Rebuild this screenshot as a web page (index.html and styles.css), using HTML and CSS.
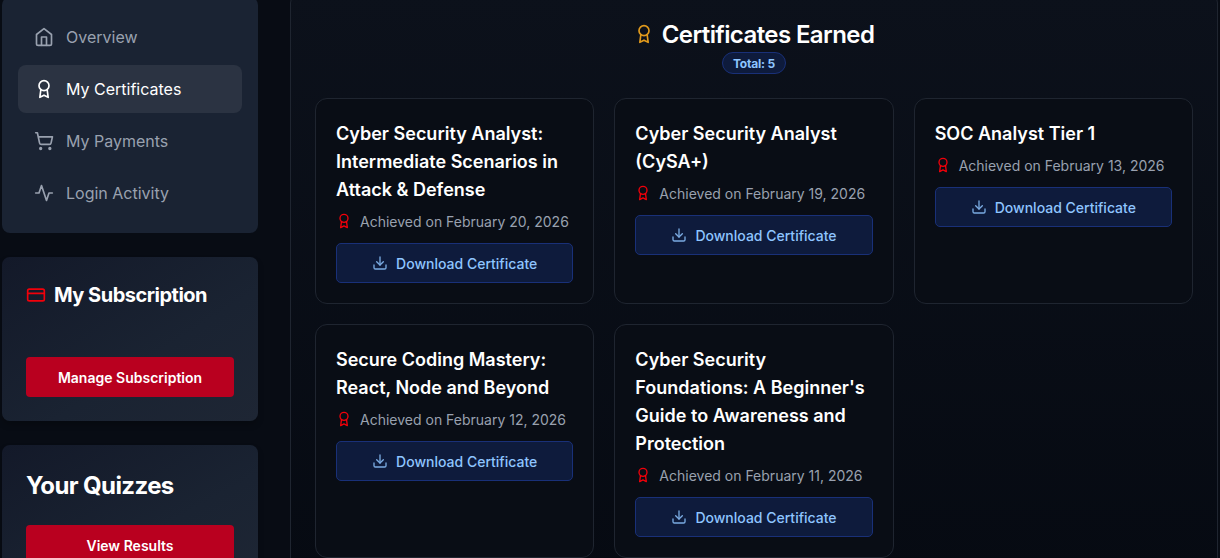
FILE: index.html
```html
<!DOCTYPE html>
<html lang="en">
<head>
    <meta charset="UTF-8">
    <meta name="viewport" content="width=device-width, initial-scale=1.0">
    <title>My Certificates</title>
    <link rel="stylesheet" href="styles.css">
</head>
<body>
    <svg class="sprite" width="0" height="0">
        <symbol id="award" viewBox="0 0 24 24">
            <circle cx="12" cy="8" r="6"/>
            <path d="M15.8 12.89 17 22l-5-2.6L7 22l1.2-9.11"/>
        </symbol>
        <symbol id="home" viewBox="0 0 24 24">
            <path d="m3 9 9-7 9 7v11a2 2 0 0 1-2 2H5a2 2 0 0 1-2-2z"/>
            <path d="M9 22V12h6v10"/>
        </symbol>
        <symbol id="cart" viewBox="0 0 24 24">
            <circle cx="8" cy="21" r="1"/>
            <circle cx="19" cy="21" r="1"/>
            <path d="M2.05 2.05h2l2.66 12.42a2 2 0 0 0 2 1.58h9.78a2 2 0 0 0 1.95-1.57l1.65-7.43H5.12"/>
        </symbol>
        <symbol id="activity" viewBox="0 0 24 24">
            <path d="M22 12h-4l-3 9L9 3l-3 9H2"/>
        </symbol>
        <symbol id="card" viewBox="0 0 24 24">
            <rect x="2" y="5" width="20" height="14" rx="2"/>
            <path d="M2 10h20"/>
        </symbol>
        <symbol id="download" viewBox="0 0 24 24">
            <path d="M21 15v4a2 2 0 0 1-2 2H5a2 2 0 0 1-2-2v-4"/>
            <path d="m7 10 5 5 5-5"/>
            <path d="M12 15V3"/>
        </symbol>
    </svg>

    <div class="dashboard">
        <aside class="sidebar">
            <nav class="menu">
                <a class="menu-item"><svg class="icon"><use href="#home"/></svg>Overview</a>
                <a class="menu-item active"><svg class="icon"><use href="#award"/></svg>My Certificates</a>
                <a class="menu-item"><svg class="icon"><use href="#cart"/></svg>My Payments</a>
                <a class="menu-item"><svg class="icon"><use href="#activity"/></svg>Login Activity</a>
            </nav>
            <section class="box subscription">
                <h3><svg class="icon red"><use href="#card"/></svg>My Subscription</h3>
                <button class="primary">Manage Subscription</button>
            </section>
            <section class="box quizzes">
                <h2>Your Quizzes</h2>
                <button class="primary">View Results</button>
            </section>
        </aside>

        <main class="panel">
            <header class="panel-header">
                <h1><svg class="icon gold"><use href="#award"/></svg><span>Certificates Earned</span></h1>
                <span class="total">Total: 5</span>
            </header>
            <div class="certificates">
                <article class="certificate">
                    <h4>Cyber Security Analyst: Intermediate Scenarios in Attack &amp; Defense</h4>
                    <p><svg class="icon small red"><use href="#award"/></svg><span>Achieved on February 20, 2026</span></p>
                    <button class="download"><svg class="icon small"><use href="#download"/></svg>Download Certificate</button>
                </article>
                <article class="certificate">
                    <h4>Cyber Security Analyst (CySA+)</h4>
                    <p><svg class="icon small red"><use href="#award"/></svg><span>Achieved on February 19, 2026</span></p>
                    <button class="download"><svg class="icon small"><use href="#download"/></svg>Download Certificate</button>
                </article>
                <article class="certificate">
                    <h4>SOC Analyst Tier 1</h4>
                    <p><svg class="icon small red"><use href="#award"/></svg><span>Achieved on February 13, 2026</span></p>
                    <button class="download"><svg class="icon small"><use href="#download"/></svg>Download Certificate</button>
                </article>
                <article class="certificate">
                    <h4>Secure Coding Mastery: React, Node and Beyond</h4>
                    <p><svg class="icon small red"><use href="#award"/></svg><span>Achieved on February 12, 2026</span></p>
                    <button class="download"><svg class="icon small"><use href="#download"/></svg>Download Certificate</button>
                </article>
                <article class="certificate">
                    <h4>Cyber Security Foundations: A Beginner's Guide to Awareness and Protection</h4>
                    <p><svg class="icon small red"><use href="#award"/></svg><span>Achieved on February 11, 2026</span></p>
                    <button class="download"><svg class="icon small"><use href="#download"/></svg>Download Certificate</button>
                </article>
            </div>
        </main>
    </div>
</body>
</html>
```
FILE: styles.css
```css
* {
    box-sizing: border-box;
}
body {
    margin: 0;
    height: 100vh;
    overflow: hidden;
    background-color: #080c14;
    color: #fff;
    font-family: Inter, sans-serif;
}
h1, h2, h3, h4, p {
    margin: 0;
}
button {
    font-family: inherit;
    cursor: pointer;
}
.sprite {
    display: none;
}
.icon {
    width: 20px;
    height: 20px;
    flex: none;
    fill: none;
    stroke: currentColor;
    stroke-width: 2;
    stroke-linecap: round;
    stroke-linejoin: round;
}
.icon.small {
    width: 16px;
    height: 16px;
}
.icon.red {
    color: #f2000a;
}
.icon.gold {
    color: #e19a1c;
}
.dashboard {
    display: flex;
    align-items: flex-start;
    gap: 32px;
    width: 1216px;
    margin: -9px 0 0 2px;
}

/* sidebar */
.sidebar {
    width: 256px;
    flex: none;
    display: flex;
    flex-direction: column;
    gap: 24px;
    padding-top: 6px;
}
.menu {
    display: flex;
    flex-direction: column;
    gap: 4px;
    padding: 16px;
    border-radius: 8px;
    background-color: #1a2333;
}
.menu-item {
    display: flex;
    align-items: center;
    gap: 12px;
    height: 48px;
    padding: 0 16px;
    border-radius: 8px;
    color: #99a1af;
    font-size: 16px;
}
.menu-item.active {
    background-color: #2b3342;
    color: #fff;
}
.box {
    display: flex;
    flex-direction: column;
    padding: 24px;
    border-radius: 8px;
    background: linear-gradient(to bottom right, #131929, #1a2332 60%, #1e2634);
    box-shadow: 0 4px 6px rgba(0, 0, 0, 0.2);
}
.subscription {
    gap: 48px;
}
.quizzes {
    gap: 23px;
}
.box h3 {
    display: flex;
    align-items: center;
    gap: 8px;
    font-size: 20px;
    line-height: 28px;
    font-weight: 700;
    letter-spacing: -0.5px;
}
.box h2 {
    padding-top: 1px;
    font-size: 24px;
    line-height: 32px;
    font-weight: 700;
    letter-spacing: -0.6px;
}
.primary {
    height: 40px;
    border: none;
    border-radius: 4px;
    background-color: #b9001f;
    color: #fff;
    font-size: 14px;
    font-weight: 600;
}

/* certificates */
.panel {
    flex: 1;
    padding: 24px;
    border: 1px solid #1f2530;
    border-radius: 12px;
    background: linear-gradient(#0c111b, #060a12);
}
.panel-header {
    display: flex;
    flex-direction: column;
    align-items: center;
    margin-bottom: 24px;
}
.panel-header h1 {
    display: flex;
    align-items: center;
    gap: 8px;
    height: 36px;
    font-size: 24px;
    line-height: 36px;
    font-weight: 600;
    letter-spacing: -0.6px;
}
.panel-header h1 span {
    padding-top: 2px;
}
.total {
    width: 64px;
    height: 22px;
    padding-top: 1px;
    border: 1px solid #193078;
    border-radius: 11px;
    background-color: #0e1b3c;
    color: #8ec5ff;
    font-size: 12px;
    line-height: 20px;
    font-weight: 700;
    letter-spacing: -0.2px;
    text-align: center;
}
.certificates {
    display: grid;
    grid-template-columns: repeat(3, 1fr);
    gap: 20px;
}
.certificate {
    padding: 21px 20px 20px;
    border: 1px solid #1f2530;
    border-radius: 12px;
    background-color: #090d15;
}
.certificate h4 {
    font-size: 18px;
    line-height: 28px;
    font-weight: 600;
}
.certificate p {
    display: flex;
    align-items: center;
    gap: 8px;
    height: 20px;
    margin: 7px 0 12px;
    color: #99a1af;
    font-size: 14px;
    line-height: 20px;
}
.certificate p span {
    padding-top: 2px;
}
.download {
    display: flex;
    align-items: center;
    justify-content: center;
    gap: 8px;
    width: 100%;
    height: 40px;
    border: 1px solid #193078;
    border-radius: 5px;
    background-color: #0e1b3c;
    color: #8ec5ff;
    font-size: 14px;
    font-weight: 500;
}
.download .icon {
    opacity: 0.85;
}
```
